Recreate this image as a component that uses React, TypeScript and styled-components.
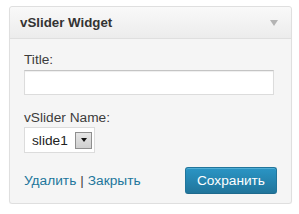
import React from "react";
import styled, { createGlobalStyle } from "styled-components";

const Global = createGlobalStyle`
  html, body { margin: 0; padding: 0; background: #ffffff; }
  body { font-family: "Liberation Sans", Arial, sans-serif; font-size: 13px; color: #333; }
`;

const Page = styled.div`
  padding: 6px 0 0 9px;
`;

const Widget = styled.div`
  width: 283px;
  height: 198px;
  box-sizing: border-box;
  border: 1px solid #dfdfdf;
  border-radius: 3px;
  background: #f5f5f5;
  box-shadow: 0 1px 1px rgba(0, 0, 0, 0.04);
  display: flex;
  flex-direction: column;
`;

const Header = styled.div`
  height: 32px;
  box-sizing: border-box;
  border-bottom: 1px solid #dfdfdf;
  background: linear-gradient(to bottom, #f9f9f9, #ececec);
  display: flex;
  align-items: center;
  justify-content: space-between;
  padding: 0 13px 0 10px;
  border-radius: 3px 3px 0 0;
`;

const HeaderTitle = styled.h3`
  margin: 0;
  font-size: 13.3px;
  font-weight: bold;
  color: #333;
  line-height: 16px;
`;

const Arrow = styled.div`
  width: 0;
  height: 0;
  border-left: 4px solid transparent;
  border-right: 4px solid transparent;
  border-top: 6px solid #b4b4b4;
`;

const Body = styled.div`
  padding: 13px 14px 0 14px;
  display: flex;
  flex-direction: column;
`;

const Label = styled.label`
  font-size: 13.7px;
  line-height: 16px;
  color: #3c3c3c;
`;

const TextInput = styled.div`
  margin: 2px 3px 0 0;
  height: 25px;
  box-sizing: border-box;
  border: 1px solid #dcdcdc;
  border-top-color: #c4c4c4;
  background: #fff;
  box-shadow: inset 0 1px 1px rgba(0, 0, 0, 0.07);
`;

const Field = styled.div<{ $gap?: number }>`
  display: flex;
  flex-direction: column;
  margin-top: ${(p) => p.$gap ?? 0}px;
`;

const Select = styled.div`
  margin-top: 1px;
  width: 71px;
  height: 26px;
  box-sizing: border-box;
  border: 1px solid #dcdcdc;
  background: #fff;
  display: flex;
  align-items: center;
  padding: 0 2px 0 7px;
  justify-content: space-between;
`;

const SelectText = styled.span`
  font-size: 13.7px;
  color: #222;
`;

const SelectButton = styled.div`
  width: 17px;
  height: 17px;
  box-sizing: border-box;
  border: 1px solid #8f8f8f;
  background: linear-gradient(to bottom, #e6e6e6, #cfcfcf);
  display: flex;
  align-items: center;
  justify-content: center;
`;

const SmallArrow = styled.div`
  width: 0;
  height: 0;
  border-left: 3px solid transparent;
  border-right: 3px solid transparent;
  border-top: 4px solid #111;
`;

const Footer = styled.div`
  margin-top: 14px;
  display: flex;
  align-items: center;
  justify-content: space-between;
`;

const Links = styled.div`
  font-size: 13.7px;
  display: flex;
  gap: 4px;
`;

const Link = styled.a`
  color: #21759b;
  text-decoration: none;
`;

const Sep = styled.span`
  color: #444;
`;

const Button = styled.button`
  height: 27px;
  box-sizing: border-box;
  padding: 0 11px;
  border: 1px solid #21759b;
  border-bottom-color: #1e6a8d;
  border-radius: 3px;
  background: linear-gradient(to bottom, #2a95c5, #21759b);
  color: #fff;
  font-family: "Liberation Sans", Arial, sans-serif;
  font-size: 13.7px;
  box-shadow: inset 0 1px 0 rgba(120, 200, 230, 0.5);
`;

export default function App() {
  return (
    <Page>
      <Global />
      <Widget>
        <Header>
          <HeaderTitle>vSlider Widget</HeaderTitle>
          <Arrow />
        </Header>
        <Body>
          <Field>
            <Label>Title:</Label>
            <TextInput />
          </Field>
          <Field $gap={15}>
            <Label>vSlider Name:</Label>
            <Select>
              <SelectText>slide1</SelectText>
              <SelectButton>
                <SmallArrow />
              </SelectButton>
            </Select>
          </Field>
          <Footer>
            <Links>
              <Link>Удалить</Link>
              <Sep>|</Sep>
              <Link>Закрыть</Link>
            </Links>
            <Button>Сохранить</Button>
          </Footer>
        </Body>
      </Widget>
    </Page>
  );
}
